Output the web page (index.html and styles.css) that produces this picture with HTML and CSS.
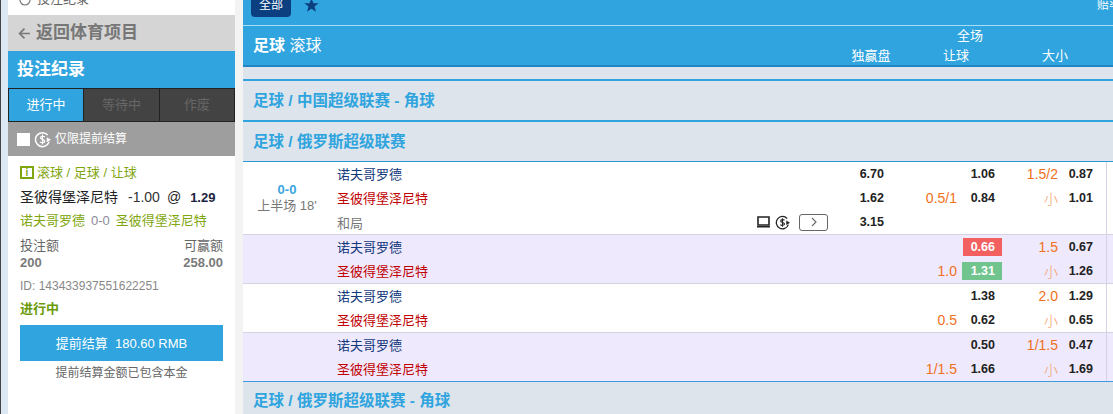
FILE: index.html
```html
<!DOCTYPE html>
<html lang="zh">
<head>
<meta charset="utf-8">
<title>投注纪录</title>
<link rel="stylesheet" href="styles.css">
</head>
<body>
<div class="page">
  <aside class="side">
    <div class="side-top">
      <svg class="clock" viewBox="0 0 12 12"><circle cx="6" cy="6" r="5" fill="none" stroke="#777" stroke-width="1.2"/></svg>
      <span>投注纪录</span>
    </div>
    <div class="back"><svg class="back-arrow" viewBox="0 0 12 12"><path d="M11 6H2M6 1.5 1.5 6 6 10.5" fill="none" stroke="#7a7a7a" stroke-width="1.6"/></svg>返回体育项目</div>
    <div class="side-title">投注纪录</div>
    <div class="tabs">
      <div class="tab tab-on">进行中</div>
      <div class="tab">等待中</div>
      <div class="tab">作废</div>
    </div>
    <div class="filter">
      <span class="check"></span>
      <svg class="cash cash-white" viewBox="0 0 18 18"><path d="M14.5 4.2A7.4 7.4 0 1 0 16 11.5" fill="none" stroke="currentColor" stroke-width="1.6"/><path d="M11.5 6.3C10.5 5.2 6.8 5.2 6.8 7.2c0 2.3 4.6 1.2 4.6 3.6 0 2-3.8 2-5 .7M9 3.8v10.4" fill="none" stroke="currentColor" stroke-width="1.3"/><path d="M13.5 6.5 18 9.2l-4.500 2.700z" fill="currentColor"/></svg>
      <span>仅限提前结算</span>
    </div>
    <div class="bet">
      <div class="bet-type"><span class="info">i</span><span>滚球 / 足球 / 让球</span></div>
      <div class="bet-pick"><span class="bet-name">圣彼得堡泽尼特</span><span class="bet-hc">-1.00</span><span class="bet-at">@</span><b>1.29</b></div>
      <div class="bet-match"><span>诺夫哥罗德</span><span class="bet-score">0-0</span><span>圣彼得堡泽尼特</span></div>
      <div class="bet-amounts">
        <div class="amount"><span>投注额</span><b>200</b></div>
        <div class="amount amount-end"><span>可赢额</span><b>258.00</b></div>
      </div>
      <div class="bet-id">ID: 143433937551622251</div>
      <div class="bet-state">进行中</div>
      <div class="cashout">提前结算&nbsp; 180.60 RMB</div>
      <div class="bet-note">提前结算金额已包含本金</div>
    </div>
  </aside>
  <div class="gutter"></div>
  <main class="main">
    <div class="topbar">
      <span class="all">全部</span>
      <svg class="star" viewBox="0 0 14 14"><path d="M7 .6 8.900 5h4.700l-3.800 3 1.400 4.800L7 10.100 2.800 12.800 4.200 8 .4 5h4.700z" fill="#0c3f7f"/></svg>
      <span class="odds-type">赔率类型</span>
    </div>
    <div class="head">
      <div class="head-title"><b>足球</b> <span>滚球</span></div>
      <div class="head-cols">
        <span class="head-full">全场</span>
        <span class="head-c1">独赢盘</span>
        <span class="head-c2">让球</span>
        <span class="head-c3">大小</span>
      </div>
    </div>
    <div class="gap"></div>
    <div class="league">足球 / 中国超级联赛 - 角球</div>
    <div class="league">足球 / 俄罗斯超级联赛</div>
    <div class="matches">
      <section class="match">
        <div class="time"><b>0-0</b><span>上半场 18'</span></div>
        <div class="lines">
          <div class="line"><span class="team home">诺夫哥罗德</span><span class="x12">6.70</span><span class="hc"></span><span class="odd">1.06</span><span class="hc2">1.5/2</span><span class="odd2">0.87</span></div>
          <div class="line"><span class="team away">圣彼得堡泽尼特</span><span class="x12">1.62</span><span class="hc">0.5/1</span><span class="odd">0.84</span><span class="hc2 small">小</span><span class="odd2">1.01</span></div>
          <div class="line"><span class="team draw">和局<span class="tools">
            <svg class="tv" viewBox="0 0 13 12"><path d="M1 1h11v8H1z" fill="none" stroke="#222" stroke-width="1.6"/><path d="M0 10h13v1.500H0z" fill="#222"/></svg>
            <svg class="cash" viewBox="0 0 18 18"><path d="M14.500 4.200A7.400 7.400 0 1 0 16 11.500" fill="none" stroke="currentColor" stroke-width="1.500"/><path d="M11.500 6.300C10.500 5.200 6.800 5.200 6.800 7.200c0 2.300 4.600 1.200 4.600 3.600 0 2-3.800 2-5 .7M9 3.800v10.400" fill="none" stroke="currentColor" stroke-width="1.300"/><path d="M13.500 6.500 18 9.200l-4.500 2.700z" fill="currentColor"/></svg>
            <span class="more"><svg viewBox="0 0 8 10"><path d="M2 1l4 4-4 4" fill="none" stroke="#666" stroke-width="1.100"/></svg></span>
          </span></span><span class="x12">3.15</span><span class="hc"></span><span class="odd"></span><span class="hc2"></span><span class="odd2"></span></div>
        </div>
      </section>
      <section class="match match-alt">
        <div class="time"></div>
        <div class="lines">
          <div class="line"><span class="team home">诺夫哥罗德</span><span class="x12"></span><span class="hc"></span><span class="odd"><em class="flash down">0.66</em></span><span class="hc2">1.5</span><span class="odd2">0.67</span></div>
          <div class="line"><span class="team away">圣彼得堡泽尼特</span><span class="x12"></span><span class="hc">1.0</span><span class="odd"><em class="flash up">1.31</em></span><span class="hc2 small">小</span><span class="odd2">1.26</span></div>
        </div>
      </section>
      <section class="match">
        <div class="time"></div>
        <div class="lines">
          <div class="line"><span class="team home">诺夫哥罗德</span><span class="x12"></span><span class="hc"></span><span class="odd">1.38</span><span class="hc2">2.0</span><span class="odd2">1.29</span></div>
          <div class="line"><span class="team away">圣彼得堡泽尼特</span><span class="x12"></span><span class="hc">0.5</span><span class="odd">0.62</span><span class="hc2 small">小</span><span class="odd2">0.65</span></div>
        </div>
      </section>
      <section class="match match-alt match-last">
        <div class="time"></div>
        <div class="lines">
          <div class="line"><span class="team home">诺夫哥罗德</span><span class="x12"></span><span class="hc"></span><span class="odd">0.50</span><span class="hc2">1/1.5</span><span class="odd2">0.47</span></div>
          <div class="line"><span class="team away">圣彼得堡泽尼特</span><span class="x12"></span><span class="hc">1/1.5</span><span class="odd">1.66</span><span class="hc2 small">小</span><span class="odd2">1.69</span></div>
        </div>
      </section>
    </div>
    <div class="league league-end">足球 / 俄罗斯超级联赛 - 角球</div>
  </main>
</div>
</body>
</html>
```

FILE: styles.css
```css
* { box-sizing: border-box; }
html, body { margin: 0; height: 100%; overflow: hidden; }
body {
  font-family: "Liberation Sans", "Noto Sans CJK SC", sans-serif;
  font-size: 13px;
  color: #222;
  background: #f3f3f3;
}
.page {
  display: flex;
  height: 414px;
  border-left: 1px solid #444;
  padding-left: 7px;
  background: #dce8f4;
}

/* sidebar */
.side { width: 227px; flex: none; background: #fff; display: flex; flex-direction: column; }
.side > *, .main > * { flex: none; }
.side-top {
  height: 15px;
  padding: 0 0 9px 11px;
  display: flex;
  align-items: flex-end;
  gap: 6px;
  color: #666;
  font-size: 13px;
  line-height: 14px;
  overflow: hidden;
}
.clock { width: 12px; height: 12px; flex: none; }
.back {
  height: 36px;
  background: #d5d5d5;
  color: #777;
  font-size: 17px;
  font-weight: 700;
  line-height: 20px;
  display: flex;
  align-items: center;
  padding: 0 0 0 10px;
  gap: 5px;
}
.back-arrow { width: 13px; height: 13px; }
.side-title {
  height: 37px;
  background: #2fa4de;
  color: #fff;
  font-size: 17px;
  font-weight: 700;
  line-height: 20px;
  display: flex;
  align-items: center;
  padding: 0 0 0 9px;
}
.tabs { display: grid; grid-template-columns: 76px 76px 75px; height: 34px; }
.tab {
  background: #434343;
  border: 1px solid #222;
  border-left-width: 0;
  color: #666;
  font-size: 13px;
  line-height: 16px;
  display: flex;
  align-items: center;
  justify-content: center;
}
.tab:first-child { border-left-width: 1px; }
.tab-on { background: #2fa4de; color: #fff; }
.filter {
  height: 34px;
  background: #9e9e9e;
  color: #fff;
  font-size: 12px;
  line-height: 16px;
  display: flex;
  align-items: center;
  padding: 0 0 0 9px;
  gap: 4px;
}
.check { width: 13px; height: 13px; background: #fff; flex: none; }
.cash { width: 15px; height: 15px; flex: none; color: #222; }
.cash-white { width: 17px; height: 17px; color: #fff; }
.bet { padding: 8px 12px 0; display: flex; flex-direction: column; font-size: 13px; line-height: 17px; }
.bet-type { display: flex; align-items: center; gap: 3px; color: #7fa60f; height: 17px; }
.info {
  width: 14px;
  height: 13px;
  border: 2px solid #7fa60f;
  color: #7fa60f;
  font-size: 10px;
  line-height: 9px;
  font-weight: 700;
  text-align: center;
  flex: none;
}
.bet-pick { display: flex; align-items: center; margin-top: 8px; height: 17px; color: #222; }
.bet-name { font-size: 14px; }
.bet-pick b { margin-left: 9px; font-size: 13px; color: #1b2340; }
.bet-hc { margin-left: 10px; font-size: 14px; color: #333; }
.bet-at { margin-left: 7px; font-size: 14px; }
.bet-match { display: flex; gap: 6px; margin-top: 6px; height: 17px; color: #7fa60f; }
.bet-score { color: #8a8a9a; font-size: 13px; }
.bet-amounts { display: flex; justify-content: space-between; margin-top: 9px; color: #666; }
.amount { display: flex; flex-direction: column; line-height: 15px; }
.amount b { margin-top: 2px; font-size: 13px; color: #7a7a7a; }
.amount-end { align-items: flex-end; }
.bet-id { margin-top: 8px; color: #888; font-size: 12px; line-height: 16px; }
.bet-state { margin-top: 6px; color: #6b9b0a; font-weight: 700; line-height: 17px; }
.cashout {
  margin-top: 8px;
  height: 36px;
  background: #2fa4de;
  color: #fff;
  font-size: 13px;
  display: flex;
  align-items: center;
  justify-content: center;
}
.bet-note { margin-top: 4px; text-align: center; color: #666; font-size: 12px; line-height: 16px; }

.gutter { width: 8px; flex: none; background: #f3f3f3; }

/* main */
.main { flex: 1; min-width: 0; background: #dde4ec; display: flex; flex-direction: column; }
.topbar {
  height: 26px;
  background: #2fa4de;
  border-bottom: 1px solid #a9dcf6;
  display: flex;
  align-items: flex-start;
  padding-left: 8px;
  position: relative;
  overflow: hidden;
}
.all {
  width: 40px;
  height: 17px;
  background: #0c3f7f;
  border-radius: 0 0 4px 4px;
  color: #fff;
  font-size: 12px;
  line-height: 10px;
  text-align: center;
}
.star { width: 15px; height: 15px; margin: -2px 0 0 13px; }
.odds-type {
  position: absolute;
  left: 854px;
  top: -2px;
  white-space: nowrap;
  color: #fff;
  font-size: 12px;
  line-height: 14px;
}
.head {
  height: 41px;
  background: #2fa4de;
  border-bottom: 2px solid #1f85c4;
  display: flex;
  justify-content: space-between;
  color: #fff;
}
.head-title { padding: 10px 0 0 10px; font-size: 16px; line-height: 20px; }
.head-title span { font-weight: 400; font-size: 16px; }
.head-cols {
  display: grid;
  grid-template-columns: 80px 90px 108px;
  grid-template-rows: 20px 20px;
  padding-right: 4px;
  font-size: 13px;
  line-height: 20px;
  text-align: center;
}
.head-full { grid-column: 2; grid-row: 1; padding-left: 28px; }
.head-c1 { grid-column: 1; grid-row: 2; }
.head-c2 { grid-column: 2; grid-row: 2; }
.head-c3 { grid-column: 3; grid-row: 2; }
.gap { height: 12px; }
.league {
  height: 41px;
  border-top: 2px solid #2fa4de;
  background: #dde4ec;
  color: #2fa4de;
  font-size: 15.500px;
  font-weight: 700;
  line-height: 39px;
  padding-left: 10px;
}
.matches { border-top: 1px solid #2f97d3; }
.match { display: flex; background: #fff; border-bottom: 1px solid #d5d2e4; }
.match-alt { background: #efe9fd; }
.match-last { border-bottom-color: #3a9ddb; }
.time {
  width: 94px;
  flex: none;
  padding-right: 6px;
  display: flex;
  flex-direction: column;
  align-items: center;
  justify-content: center;
  font-size: 13px;
  line-height: 16px;
  color: #777;
}
.time b { color: #3aa5e0; }
.lines { flex: 1; min-width: 0; }
.line {
  height: 24px;
  display: grid;
  grid-template-columns: 500px 48px 72px 45px 56px 49px;
  align-items: center;
}
.line > :last-child { border-right: 1px solid #d5d2e4; height: 100%; display: flex; align-items: center; justify-content: flex-end; }
.team { font-size: 13px; display: flex; align-items: center; padding-bottom: 2px; }
.home { color: #12387a; }
.away { color: #c00000; }
.draw { color: #777; padding-right: 9px; padding-bottom: 0; }
.tools { margin-left: auto; display: flex; align-items: center; gap: 5px; }
.tv { width: 13px; height: 12px; }
.more {
  width: 29px;
  height: 17px;
  margin-left: 4px;
  border: 1px solid #666;
  border-radius: 3px;
  display: flex;
  align-items: center;
  justify-content: center;
}
.more svg { width: 8px; height: 10px; }
.x12, .odd, .odd2 { font-size: 12.500px; font-weight: 700; color: #222; text-align: right; }
.x12 { padding-right: 1px; }
.hc, .hc2 { font-size: 14px; color: #f07020; text-align: right; }
.small { font-weight: 300; color: #f39a60; padding-bottom: 1px; }
.odd { padding-right: 7px; }
.odd2 { padding-right: 13px; }
.flash {
  display: block;
  margin-right: -7px;
  margin-left: 6px;
  height: 18px;
  padding-right: 7px;
  color: #fff;
  font-style: normal;
  line-height: 18px;
}
.down { background: #f26060; }
.up { background: #72c48f; margin-left: 5px; }
.league-end { border-top: 0; line-height: 37px; }
```
